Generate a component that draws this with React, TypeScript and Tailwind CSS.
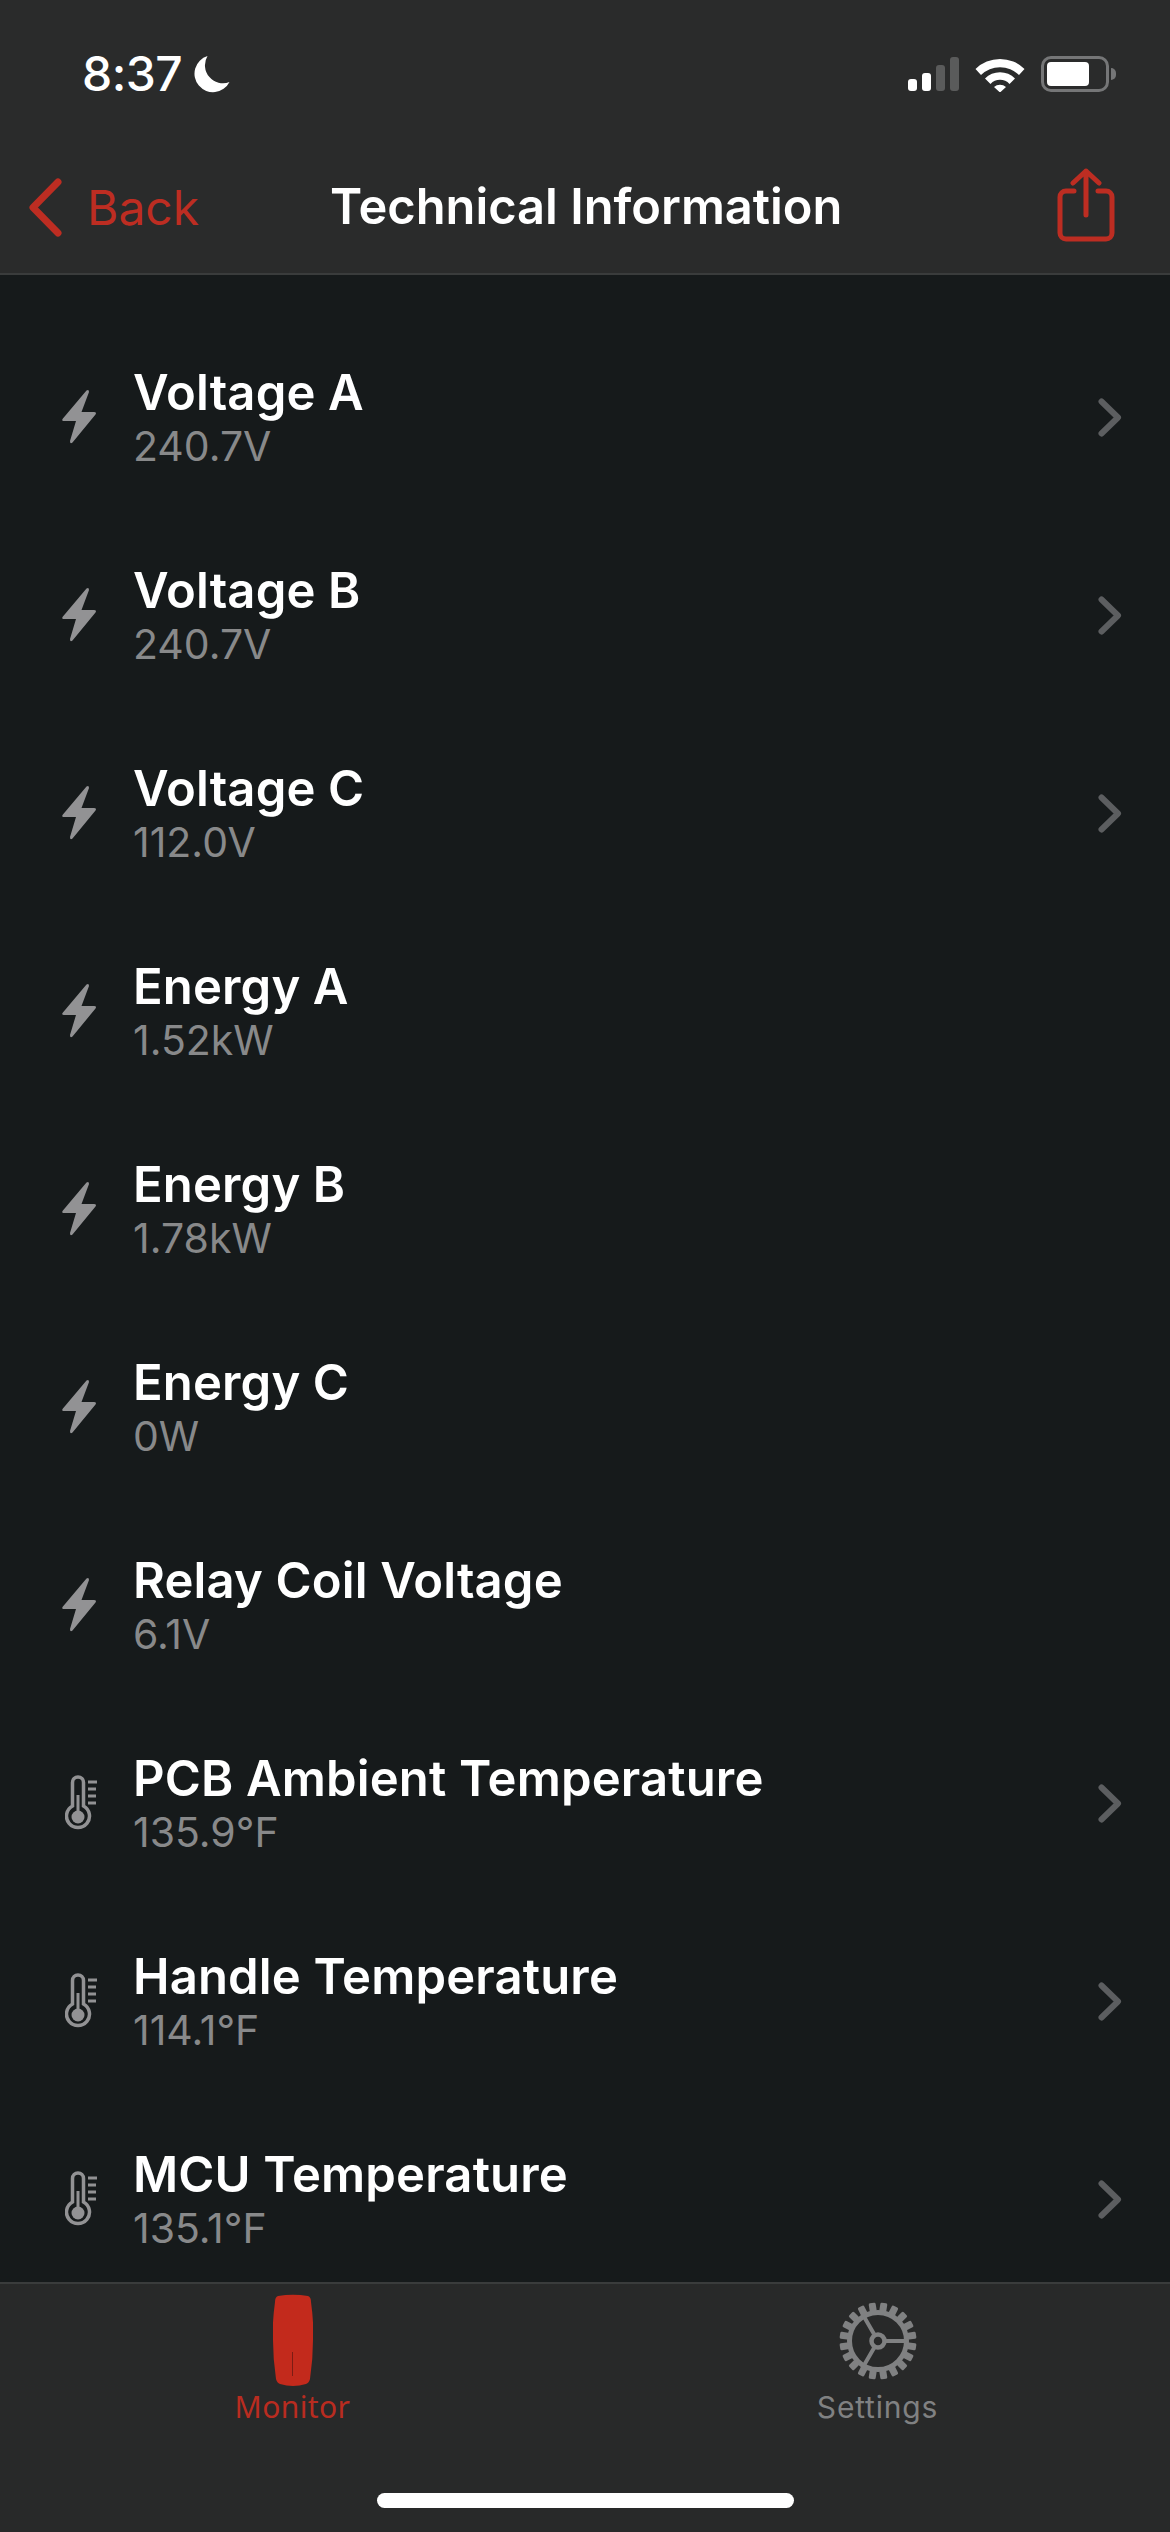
const rows = [
  { name: "Voltage A", value: "240.7V", icon: "bolt", more: true },
  { name: "Voltage B", value: "240.7V", icon: "bolt", more: true },
  { name: "Voltage C", value: "112.0V", icon: "bolt", more: true },
  { name: "Energy A", value: "1.52kW", icon: "bolt", more: false },
  { name: "Energy B", value: "1.78kW", icon: "bolt", more: false },
  { name: "Energy C", value: "0W", icon: "bolt", more: false },
  { name: "Relay Coil Voltage", value: "6.1V", icon: "bolt", more: false },
  { name: "PCB Ambient Temperature", value: "135.9°F", icon: "temp", more: true },
  { name: "Handle Temperature", value: "114.1°F", icon: "temp", more: true },
  { name: "MCU Temperature", value: "135.1°F", icon: "temp", more: true },
];

function Bolt() {
  return (
    <svg width="36" height="56" viewBox="0 0 36 56">
      <path
        d="M25.5 1.5 L1.5 30 Q0.5 32 3 32 L15 32 L9 52 Q9 55.5 11.5 53.5 L34.5 25.5 Q36 23 33 23 L20.5 23 L28 3 Q28 0 25.5 1.5 Z"
        fill="#929294"
      />
    </svg>
  );
}

function Thermometer() {
  return (
    <svg className="ml-[6px]" width="34" height="56" viewBox="0 0 34 56" fill="none">
      <path
        d="M7.5 31 V7.5 A5.5 5.5 0 0 1 18.5 7.5 V31 A11.5 11.5 0 1 1 7.5 31 Z"
        stroke="#929294"
        strokeWidth="3.5"
      />
      <circle cx="13" cy="42" r="6.5" fill="#929294" />
      <rect x="11.5" y="20" width="3" height="20" fill="#929294" />
      <path d="M23 7 H32 M23 14 H31 M23 21 H31 M23 28 H31" stroke="#929294" strokeWidth="3" />
    </svg>
  );
}

function Chevron() {
  return (
    <svg width="24" height="39" viewBox="0 0 24 39" fill="none">
      <path
        d="M3.5 3.5 L20 19.5 L3.5 35.5"
        stroke="#5c5e60"
        strokeWidth="6"
        strokeLinecap="round"
        strokeLinejoin="round"
      />
    </svg>
  );
}

function Gear() {
  const teeth = Array.from({ length: 20 }, (_, i) => i * 18 + 9);
  return (
    <svg width="78" height="78" viewBox="0 0 78 78" fill="none">
      {teeth.map((a) => (
        <rect
          key={a}
          x="35.5"
          y="0.5"
          width="7"
          height="9"
          rx="1.5"
          fill="#808182"
          transform={`rotate(${a} 39 39)`}
        />
      ))}
      <circle cx="39" cy="39" r="28.5" stroke="#808182" strokeWidth="5" />
      <circle cx="39" cy="39" r="6.5" stroke="#808182" strokeWidth="4.5" />
      <path
        d="M47 39 H67 M35 32 L24 13 M35 46 L24 65"
        stroke="#808182"
        strokeWidth="4"
      />
    </svg>
  );
}

export default function App() {
  return (
    <div className="flex h-[2532px] w-[1170px] flex-col overflow-hidden bg-[#161a1b] font-['Inter',sans-serif] text-white">
      <header className="h-[275px] shrink-0 border-b-2 border-[#3a3c3c] bg-[#2a2b2b]">
        <div className="flex h-[148px] items-center justify-between pl-[82px] pr-[54px]">
          <div className="flex items-center gap-[12px]">
            <span className="text-[48px] leading-none font-medium tracking-[-0.5px]">8:37</span>
            <svg width="36" height="38" viewBox="0 0 36 38">
              <path
                d="M13.5 1 A18.5 18.5 0 1 0 35.5 27 A18 18 0 0 1 13.5 1 Z"
                fill="#ffffff"
              />
            </svg>
          </div>
          <div className="flex items-center gap-[16px]">
            <div className="flex items-end gap-[5px]">
              <span className="h-[12px] w-[9px] rounded-[3px] bg-white" />
              <span className="h-[18px] w-[9px] rounded-[3px] bg-white" />
              <span className="h-[26px] w-[9px] rounded-[3px] bg-[#5a5b5b]" />
              <span className="h-[34px] w-[9px] rounded-[3px] bg-[#5a5b5b]" />
            </div>
            <svg width="50" height="36" viewBox="0 0 50 36">
              <path
                d="M0.5 13 A35 35 0 0 1 49.5 13 L44 19 A27 27 0 0 0 6 19 Z M10 22.5 A21 21 0 0 1 40 22.5 L34.5 28 A13 13 0 0 0 15.5 28 Z M19 31 A9 9 0 0 1 31 31 L25 36.5 Z"
                fill="#ffffff"
              />
            </svg>
            <div className="flex items-center gap-[2px]">
              <div className="flex h-[36px] w-[68px] items-center rounded-[10px] border-[3px] border-[#757677] px-[3px]">
                <div className="h-[24px] w-[42px] rounded-[4px] bg-white" />
              </div>
              <span className="h-[12px] w-[5px] rounded-r-full bg-[#757677]" />
            </div>
          </div>
        </div>
        <nav className="relative flex h-[125px] items-start justify-between pl-[28px] pr-[55px]">
          <div className="flex items-center gap-[24px] pt-[30px]">
            <svg width="35" height="59" viewBox="0 0 35 59" fill="none">
              <path
                d="M30 4 L5 29.5 L30 55"
                stroke="#bd2d22"
                strokeWidth="7"
                strokeLinecap="round"
                strokeLinejoin="round"
              />
            </svg>
            <span className="text-[48px] leading-[59px] text-[#bd2d22]">Back</span>
          </div>
          <h1 className="absolute left-[330px] top-[29px] text-[48.8px] leading-[59px] font-semibold">
            Technical Information
          </h1>
          <svg className="mt-[20px]" width="58" height="74" viewBox="0 0 58 74" fill="none">
            <path
              d="M17 23 H9 A6 6 0 0 0 3 29 V65 A6 6 0 0 0 9 71 H49 A6 6 0 0 0 55 65 V29 A6 6 0 0 0 49 23 H41"
              stroke="#bd2d22"
              strokeWidth="5"
              strokeLinecap="round"
            />
            <path
              d="M29 47 V3 M16 15 L29 3 L42 15"
              stroke="#bd2d22"
              strokeWidth="5"
              strokeLinecap="round"
              strokeLinejoin="round"
            />
          </svg>
        </nav>
      </header>

      <main className="min-h-0 flex-1 overflow-hidden pt-[43px]">
        {rows.map((r) => (
          <div key={r.name} className="flex h-[198px] items-center pr-[48px]">
            <div className="flex w-[133px] shrink-0 justify-center pl-[24px]">
              {r.icon === "bolt" ? <Bolt /> : <Thermometer />}
            </div>
            <div className="min-w-0 flex-1">
              <div className="text-[49px] leading-[57px] font-semibold tracking-[0.15px]">{r.name}</div>
              <div className="text-[41px] leading-[50px] text-[#88898a]">{r.value}</div>
            </div>
            {r.more && <Chevron />}
          </div>
        ))}
      </main>

      <footer className="relative h-[250px] shrink-0 border-t-2 border-[#3a3c3c] bg-[#282929]">
        <div className="grid grid-cols-2">
          <div className="flex flex-col items-center pt-[10px]">
            <svg width="40" height="93" viewBox="0 0 40 93">
              <path
                d="M5 2 Q20 -0.5 35 2 Q38 3 38 8 Q41 30 40 46 Q40 65 37 85 Q36 89 33 90 Q20 94 7 90 Q4 89 3 85 Q0 65 0 46 Q-1 30 2 8 Q2 3 5 2 Z"
                fill="#c32a1c"
              />
              <path d="M19.5 58 V82" stroke="#7c1c14" strokeWidth="1" />
            </svg>
            <span className="mt-[2px] text-[30px] leading-[36px] tracking-[0.4px] text-[#b92c20] font-['Noto_Sans',sans-serif]">
              Monitor
            </span>
          </div>
          <div className="flex flex-col items-center pt-[18px]">
            <Gear />
            <span className="mt-[9px] text-[30px] leading-[36px] tracking-[0.8px] text-[#808182]">
              Settings
            </span>
          </div>
        </div>
        <div className="absolute bottom-[24px] left-[377px] h-[15px] w-[417px] rounded-full bg-white" />
      </footer>
    </div>
  );
}
